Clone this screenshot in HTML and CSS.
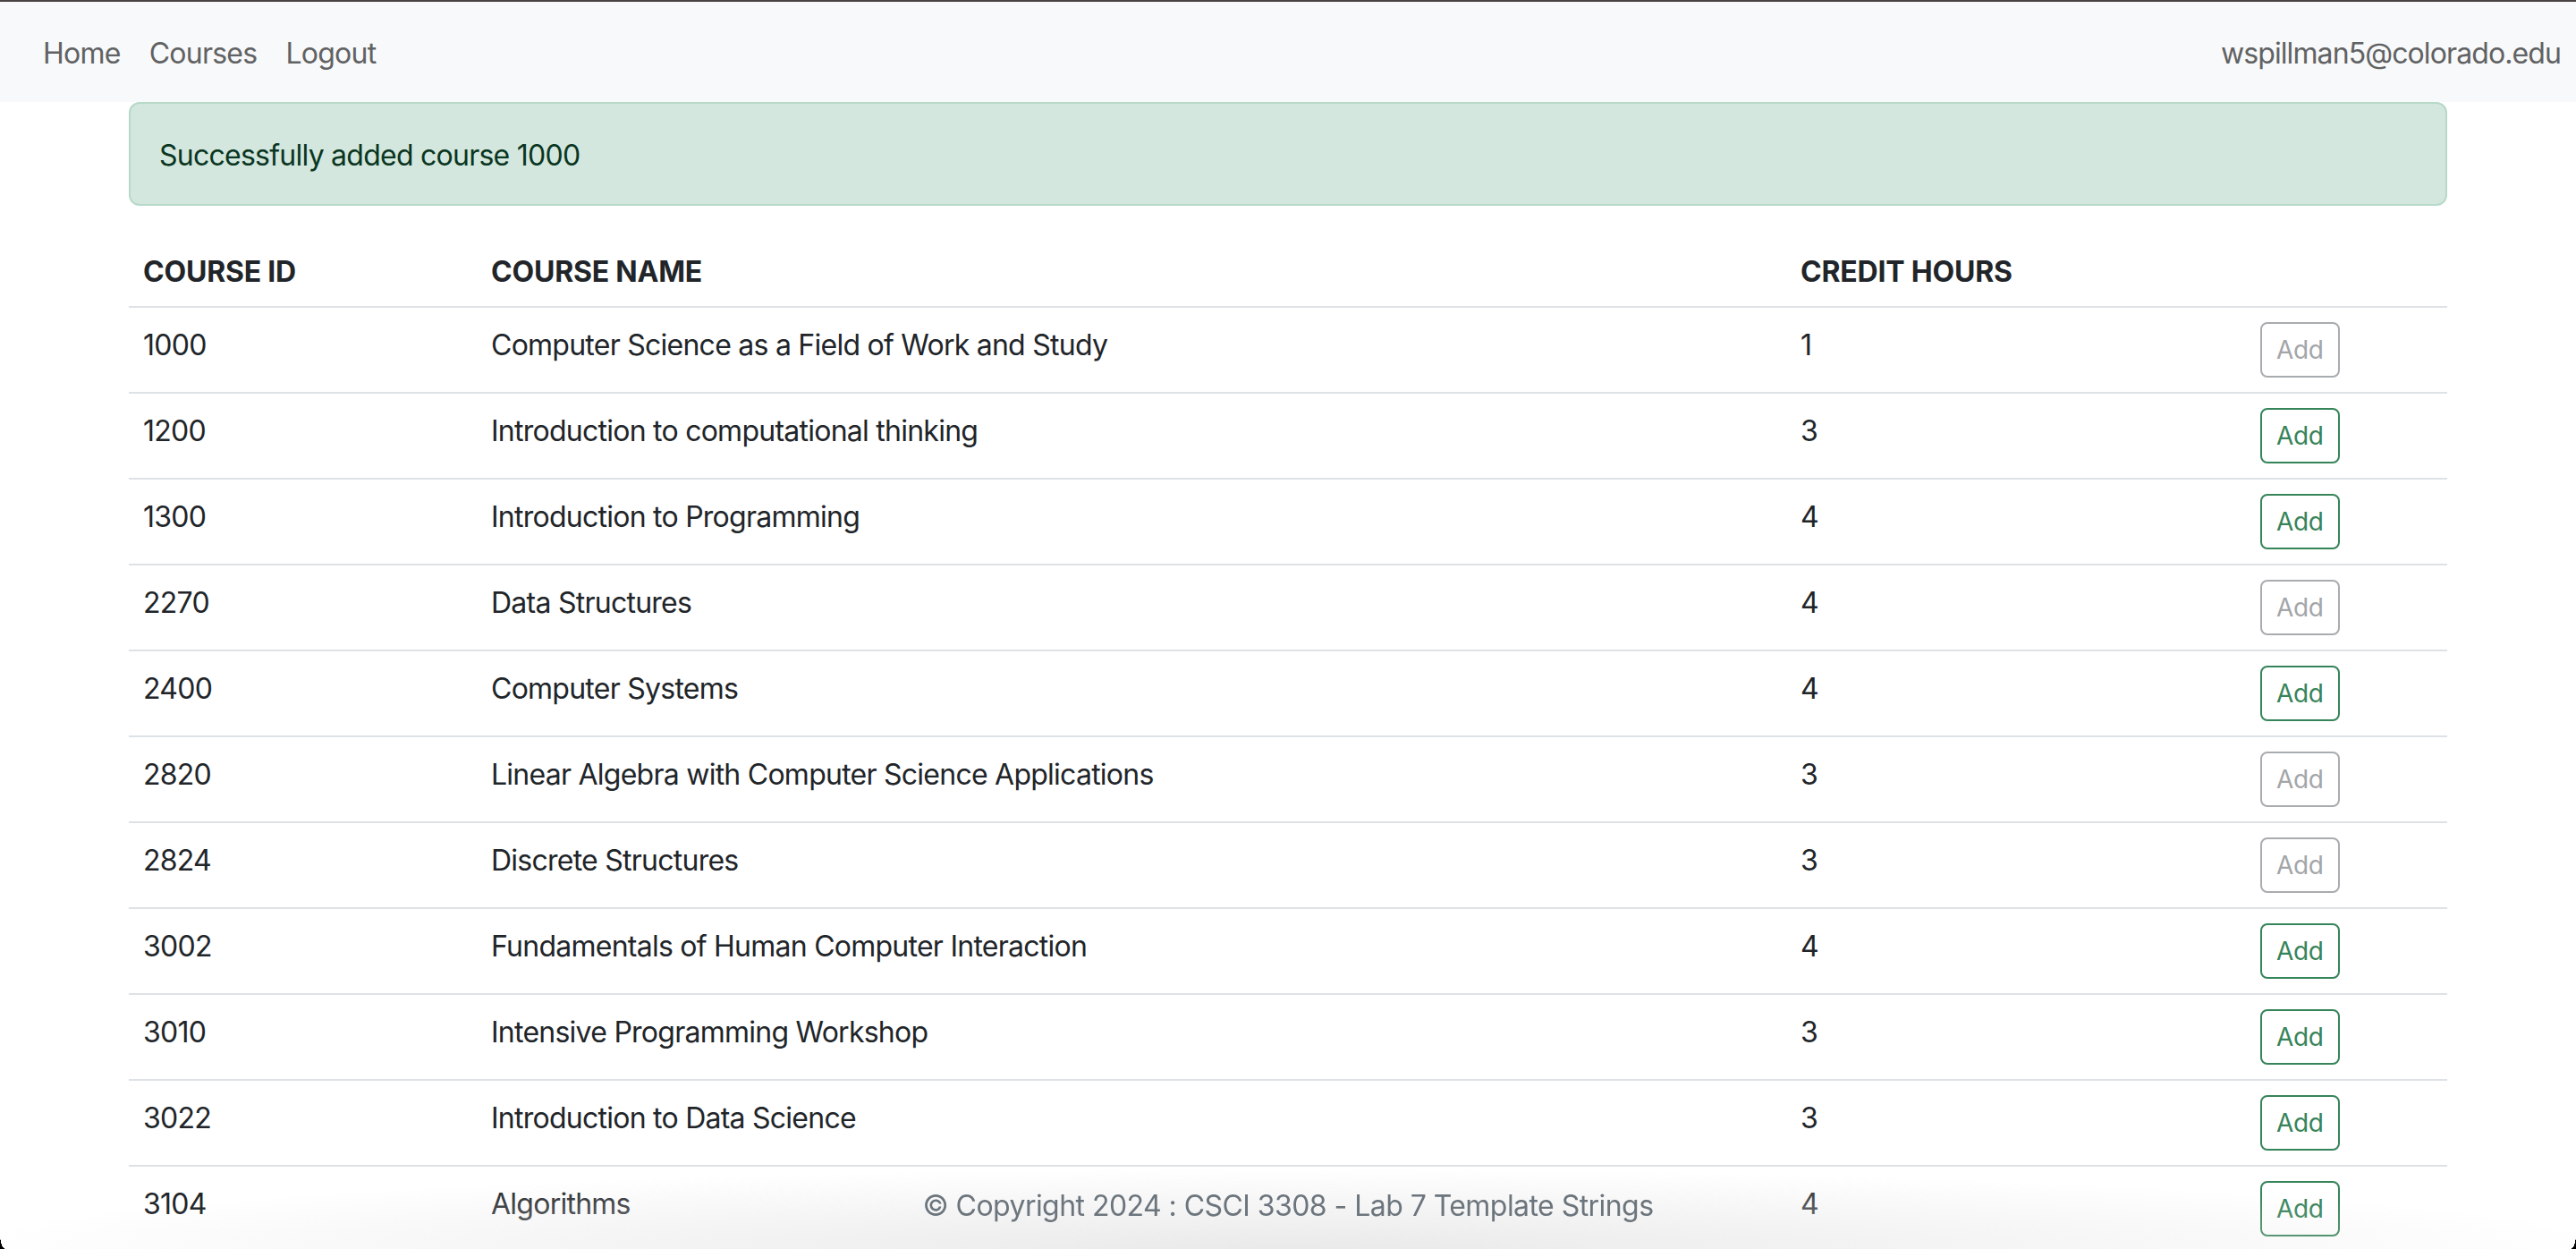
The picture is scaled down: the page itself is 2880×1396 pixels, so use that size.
FILE: index.html
```html
<!DOCTYPE html>
<html lang="en">
<head>
<meta charset="utf-8">
<title>Courses</title>
<link rel="stylesheet" href="styles.css">
</head>
<body>
<div class="window-edge"></div>
<nav class="navbar">
  <ul class="nav-links">
    <li><a class="nav-link" href="#">Home</a></li>
    <li><a class="nav-link" href="#">Courses</a></li>
    <li><a class="nav-link" href="#">Logout</a></li>
  </ul>
  <span class="navbar-text">wspillman5@colorado.edu</span>
</nav>
<main class="container">
  <div class="alert">Successfully added course 1000</div>
  <table class="table">
    <thead>
      <tr>
        <th class="col-id">COURSE ID</th>
        <th class="col-name">COURSE NAME</th>
        <th class="col-hours">CREDIT HOURS</th>
        <th class="col-action"></th>
      </tr>
    </thead>
    <tbody>
      <tr><td>1000</td><td>Computer Science as a Field of Work and Study</td><td>1</td><td class="cell-action"><button class="btn btn-disabled" disabled>Add</button></td></tr>
      <tr><td>1200</td><td>Introduction to computational thinking</td><td>3</td><td class="cell-action"><button class="btn btn-add">Add</button></td></tr>
      <tr><td>1300</td><td>Introduction to Programming</td><td>4</td><td class="cell-action"><button class="btn btn-add">Add</button></td></tr>
      <tr><td>2270</td><td>Data Structures</td><td>4</td><td class="cell-action"><button class="btn btn-disabled" disabled>Add</button></td></tr>
      <tr><td>2400</td><td>Computer Systems</td><td>4</td><td class="cell-action"><button class="btn btn-add">Add</button></td></tr>
      <tr><td>2820</td><td>Linear Algebra with Computer Science Applications</td><td>3</td><td class="cell-action"><button class="btn btn-disabled" disabled>Add</button></td></tr>
      <tr><td>2824</td><td>Discrete Structures</td><td>3</td><td class="cell-action"><button class="btn btn-disabled" disabled>Add</button></td></tr>
      <tr><td>3002</td><td>Fundamentals of Human Computer Interaction</td><td>4</td><td class="cell-action"><button class="btn btn-add">Add</button></td></tr>
      <tr><td>3010</td><td>Intensive Programming Workshop</td><td>3</td><td class="cell-action"><button class="btn btn-add">Add</button></td></tr>
      <tr><td>3022</td><td>Introduction to Data Science</td><td>3</td><td class="cell-action"><button class="btn btn-add">Add</button></td></tr>
      <tr><td>3104</td><td>Algorithms</td><td>4</td><td class="cell-action"><button class="btn btn-add">Add</button></td></tr>
    </tbody>
  </table>
</main>
<footer class="footer">© Copyright 2024 : CSCI 3308 - Lab 7 Template Strings</footer>
<div class="corner corner-left"></div>
<div class="corner corner-right"></div>
</body>
</html>
```

FILE: styles.css
```css
html, body {
  margin: 0;
  padding: 0;
  overflow: hidden;
  height: 100%;
}

body {
  font-family: Inter, "Noto Sans", "Liberation Sans", sans-serif;
  font-size: 32px;
  line-height: 48px;
  color: #212529;
  background: #fff;
  letter-spacing: -0.75px;
}

.window-edge {
  height: 2px;
  background: #4a4242;
}

.navbar {
  height: 112px;
  box-sizing: border-box;
  padding: 3px 17px 0 32px;
  background: #f8f9fa;
  display: flex;
  align-items: center;
  justify-content: space-between;
}

.nav-links {
  list-style: none;
  margin: 0;
  padding: 0;
  display: flex;
}

.nav-link {
  display: block;
  padding: 0 16px;
  color: #616263;
  text-decoration: none;
}

.navbar-text {
  color: #616263;
  letter-spacing: -0.9px;
}

.container {
  width: 2592px;
  margin: 0 auto;
}

.alert {
  background: #d4e7de;
  border: 2px solid #b6d9c8;
  border-radius: 12px;
  color: #0a3622;
  padding: 34px 32px 30px;
  margin-bottom: 32px;
}

.table {
  width: 100%;
  border-collapse: collapse;
  table-layout: fixed;
  vertical-align: top;
}

.table th,
.table td {
  box-sizing: border-box;
  padding: 18px 16px 14px;
  border-bottom: 2px solid #dee2e6;
  text-align: left;
  vertical-align: top;
}

.table td.cell-action {
  padding: 16px;
}

.table th {
  font-weight: 700;
  letter-spacing: -0.2px;
}

.col-id { width: 389px; }
.col-name { width: 1464px; }
.col-hours { width: 514px; }
.col-action { width: 225px; }

.btn {
  display: block;
  box-sizing: border-box;
  height: 62px;
  padding: 8px 16px;
  font-family: inherit;
  font-size: 28px;
  line-height: 42px;
  letter-spacing: -0.3px;
  border-radius: 8px;
  background: transparent;
  border: 2px solid;
}

.btn-add {
  color: #36845a;
  border-color: #36845a;
}

.btn-disabled {
  color: #a3a6a9;
  border-color: #a9acaf;
}

.footer {
  position: fixed;
  left: 0;
  right: 0;
  bottom: 0;
  height: 96px;
  box-sizing: border-box;
  padding-top: 24px;
  text-align: center;
  color: #6c757d;
  letter-spacing: -0.55px;
  background: radial-gradient(ellipse 1500px 90px at 50% 100%, rgba(228,228,228,0.8), rgba(255,255,255,0));
}

.corner {
  position: fixed;
  bottom: 0;
  width: 6px;
  height: 16px;
}

.corner-left {
  left: 0;
  background: radial-gradient(ellipse 6px 16px at 100% 0, rgba(0,0,0,0) 97%, #000 100%);
}

.corner-right {
  right: 0;
  background: radial-gradient(ellipse 6px 16px at 0 0, rgba(0,0,0,0) 97%, #000 100%);
}
```
